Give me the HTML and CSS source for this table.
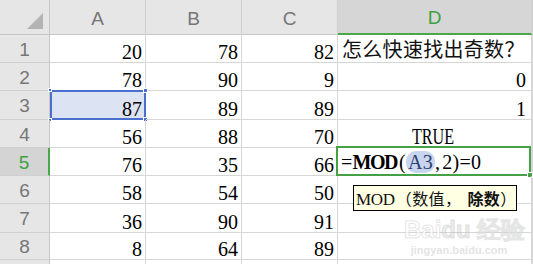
FILE: index.html
```html
<!DOCTYPE html>
<html lang="zh">
<head>
<meta charset="utf-8">
<title>Sheet</title>
<link rel="stylesheet" href="styles.css">
</head>
<body>
<div class="sheet">
  <div class="corner"><span class="tri"></span></div>
  <div class="ch">A</div>
  <div class="ch">B</div>
  <div class="ch">C</div>
  <div class="ch ch-active">D</div>
  <div class="ch"></div>

  <div class="rh">1</div>
  <div class="c num">20</div>
  <div class="c num">78</div>
  <div class="c num">82</div>
  <div class="c dq">怎么快速找出奇数？</div>
  <div class="c"></div>

  <div class="rh">2</div>
  <div class="c num">78</div>
  <div class="c num">90</div>
  <div class="c num">9</div>
  <div class="c num dnum">0</div>
  <div class="c"></div>

  <div class="rh">3</div>
  <div class="c num sel">87<i class="h tl"></i><i class="h tr"></i><i class="h bl"></i><i class="h br"></i></div>
  <div class="c num">89</div>
  <div class="c num">89</div>
  <div class="c num dnum">1</div>
  <div class="c"></div>

  <div class="rh">4</div>
  <div class="c num">56</div>
  <div class="c num">88</div>
  <div class="c num">70</div>
  <div class="c dtrue"><span class="true-txt">TRUE</span></div>
  <div class="c"></div>

  <div class="rh rh-active">5</div>
  <div class="c num">76</div>
  <div class="c num">35</div>
  <div class="c num">66</div>
  <div class="c active"><span class="formula">=<b>MOD</b>(<span class="ref">A3</span>,&#8202;2)=0</span><i class="fill"></i></div>
  <div class="c"></div>

  <div class="rh">6</div>
  <div class="c num">58</div>
  <div class="c num">54</div>
  <div class="c num">50</div>
  <div class="c tipcell"><div class="tip"><span class="mono">MOD</span>（数值，<b>除数</b>）</div></div>
  <div class="c"></div>

  <div class="rh">7</div>
  <div class="c num">36</div>
  <div class="c num">90</div>
  <div class="c num">91</div>
  <div class="c"></div>
  <div class="c"></div>

  <div class="rh">8</div>
  <div class="c num">8</div>
  <div class="c num">64</div>
  <div class="c num">89</div>
  <div class="c"></div>
  <div class="c"></div>

  <div class="rh"></div>
  <div class="c"></div>
  <div class="c"></div>
  <div class="c"></div>
  <div class="c"></div>
  <div class="c"></div>
</div>
<div class="watermark">
  <div class="wm-logo">Bai<span class="wm-du">du</span> 经验</div>
  <div class="wm-url">jingyan.baidu.com</div>
</div>
</body>
</html>
```

FILE: styles.css
```css
html, body {
  margin: 0;
  padding: 0;
  background: #ffffff;
  overflow: hidden;
}

body {
  width: 533px;
  height: 264px;
  position: relative;
}

.sheet {
  display: grid;
  grid-template-columns: 50px 96px 96px 96px 194px 1fr;
  grid-template-rows: 35px 28px 28px 29px 28px 28px 28px 29px 27px 28px;
  width: 533px;
  height: 264px;
  overflow: hidden;
}

.sheet > div {
  box-sizing: border-box;
  border-right: 1px solid #d6d6d6;
  border-bottom: 1px solid #d6d6d6;
  min-width: 0;
  position: relative;
}

/* headers */
.corner {
  background: #e6e6e6;
  border-right-color: #c6c6c6 !important;
  border-bottom-color: #c6c6c6 !important;
}

.tri {
  position: absolute;
  right: 6px;
  bottom: 5px;
  width: 0;
  height: 0;
  border-left: 16px solid transparent;
  border-bottom: 16px solid #b4b4b4;
}

.ch {
  background: #e6e6e6;
  border-right-color: #d0d0d0 !important;
  border-bottom-color: #c6c6c6 !important;
  display: flex;
  align-items: center;
  justify-content: center;
  padding-top: 3px;
  font: 19px/20px "Liberation Sans", Arial, sans-serif;
  color: #767676;
}

.ch-active {
  background: #d6d6d6;
  color: #3fa03f;
  border-bottom: 2px solid #49a849 !important;
}

.rh {
  background: #e6e6e6;
  border-right-color: #c6c6c6 !important;
  border-bottom-color: #d0d0d0 !important;
  display: flex;
  align-items: center;
  justify-content: center;
  padding-top: 2px;
  font: 19px/20px "Liberation Sans", Arial, sans-serif;
  color: #767676;
}

.rh-active {
  background: #d4d4d4;
  color: #3fa03f;
  border-right: 2px solid #49a849 !important;
}

/* cells */
.num {
  display: flex;
  justify-content: flex-end;
  align-items: flex-end;
  padding-right: 3px;
  font: 20px/20px "Liberation Serif", "Times New Roman", serif;
  color: #000;
}

.dnum {
  padding-right: 5px;
}

.dq {
  display: flex;
  align-items: flex-end;
  padding: 0 0 2px 4px;
  font: 20px/22px "Noto Sans CJK SC", sans-serif;
  letter-spacing: 0.3px;
  color: #111;
  white-space: nowrap;
}

.dtrue {
  display: flex;
  align-items: flex-end;
  justify-content: center;
  padding-right: 2px;
}

.true-txt {
  display: inline-block;
  font: 23px/21px "Liberation Serif", "Times New Roman", serif;
  color: #000;
  transform: scaleX(0.7);
}

/* selected A3 */
.sel {
  background: #dce3f3;
}

.sel::before {
  content: "";
  position: absolute;
  left: 0;
  top: -1px;
  right: -1px;
  bottom: -1px;
  border: 2px solid #4a6fce;
}

.h {
  position: absolute;
  width: 5px;
  height: 5px;
  background: #4a6fce;
  border: 1px solid #fff;
  box-sizing: border-box;
}

.h.tl { left: -2px; top: -3px; width: 4px; height: 4px; }
.h.tr { right: -3px; top: -3px; }
.h.bl { left: -2px; bottom: -3px; width: 4px; height: 4px; }
.h.br { right: -3px; bottom: -3px; }

/* active formula cell */
.active {
  display: flex;
  align-items: flex-end;
  padding: 0 0 2px 3px;
}

.active::after {
  content: "";
  position: absolute;
  left: -2px;
  top: -2px;
  right: 0;
  bottom: -1px;
  border: 2px solid #46a046;
  pointer-events: none;
}

.formula {
  font: 20px/22px "Liberation Serif", "Times New Roman", serif;
  color: #000;
  white-space: nowrap;
  letter-spacing: 0.3px;
}

.formula b {
  font-weight: bold;
  letter-spacing: -1.5px;
  margin-right: 2px;
}

.ref {
  display: inline-block;
  background: #c9d5ef;
  border-radius: 10px;
  padding: 0 2px 0 2px;
  color: #2c3f6e;
}

.fill {
  position: absolute;
  right: -2px;
  bottom: -3px;
  width: 6px;
  height: 6px;
  box-sizing: border-box;
  background: #46a046;
  border: 1px solid #fff;
  z-index: 2;
}

/* tooltip */
.tipcell {
  z-index: 3;
}

.tip {
  position: absolute;
  left: 15px;
  top: 9px;
  width: 164px;
  height: 26px;
  box-sizing: border-box;
  border: 1px solid #000;
  background: #ffffe3;
  padding: 1px 0 0 2px;
  font: 16px/22px "Noto Sans CJK SC", sans-serif;
  letter-spacing: 0.4px;
  color: #111;
  white-space: nowrap;
}

.tip .mono {
  font: 17px/22px "Liberation Serif", serif;
  letter-spacing: -0.3px;
  margin-right: 1px;
}

.tip b {
  font-weight: bold;
  margin-left: 6px;
}

/* watermark */
.watermark {
  position: absolute;
  left: 404px;
  top: 216px;
  width: 110px;
  text-align: center;
  pointer-events: none;
}

.wm-logo {
  font: bold 24px/28px "Liberation Sans", sans-serif;
  -webkit-text-stroke: 1px rgba(190, 190, 190, 0.4);
  color: rgba(255, 255, 255, 0.6);
  white-space: nowrap;
}

.wm-du {
  color: rgba(200, 200, 200, 0.35);
}

.wm-url {
  font: bold 11px/12px "Liberation Sans", sans-serif;
  color: rgba(200, 200, 200, 0.5);
}
```
